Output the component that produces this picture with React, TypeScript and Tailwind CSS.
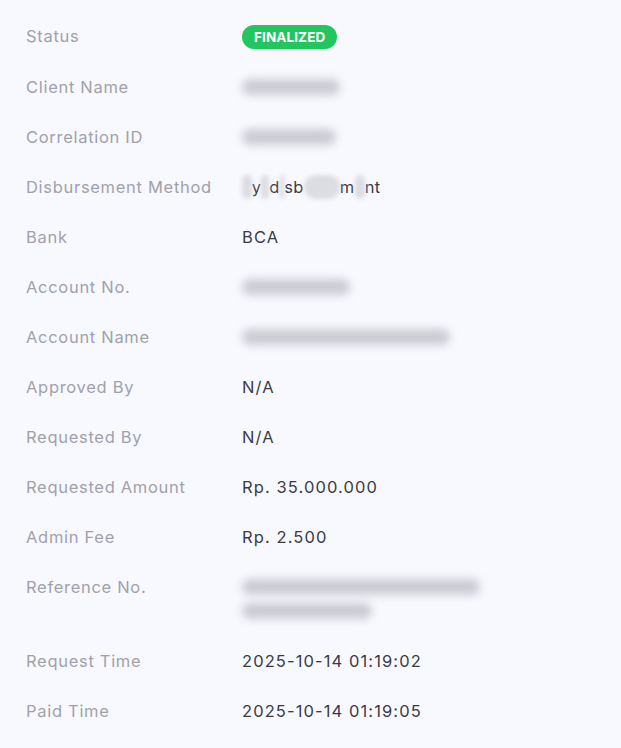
import React from 'react'

type Row = { label: string; value?: React.ReactNode }

function Blur({ w, className = "" }: { w: number; className?: string }) {
    return (
        <span
            className={`block h-[16px] rounded-full bg-[#cbcbd3] blur-[4px] ${className}`}
            style={{ width: w }}
        />
    )
}

// partly hidden text: "~" marks a character that is smudged out
function Smudged({ text }: { text: string }) {
    const parts = text.match(/(~[^~]+~|[^~]+)/g) ?? []
    return (
        <span className="tracking-[0.4px]">
            {parts.map((p, i) =>
                p.startsWith("~") ? (
                    <span key={i} className="inline-block rounded-full bg-[#dcdce3] text-transparent blur-[2px]">
                        {p.slice(1, -1)}
                    </span>
                ) : (
                    <span key={i}>{p}</span>
                )
            )}
        </span>
    )
}

export default function App() {
    const rows: Row[] = [
        {
            label: "Status",
            value: (
                <span className="inline-flex items-center h-[24px] px-[12px] rounded-full bg-[#22c55e] text-white text-[13.5px] font-bold tracking-[0.1px]">
                    FINALIZED
                </span>
            ),
        },
        { label: "Client Name", value: <div className="h-[24px] flex items-center"><Blur w={98} /></div> },
        { label: "Correlation ID", value: <div className="h-[24px] flex items-center"><Blur w={94} /></div> },
        { label: "Disbursement Method", value: <Smudged text="~a~y~_~d~i~sb~urse~m~e~nt" /> },
        { label: "Bank", value: "BCA" },
        { label: "Account No.", value: <div className="h-[24px] flex items-center"><Blur w={108} /></div> },
        { label: "Account Name", value: <div className="h-[24px] flex items-center"><Blur w={208} /></div> },
        { label: "Approved By", value: "N/A" },
        { label: "Requested By", value: "N/A" },
        { label: "Requested Amount", value: "Rp. 35.000.000" },
        { label: "Admin Fee", value: "Rp. 2.500" },
        {
            label: "Reference No.",
            value: (
                <div className="flex flex-col">
                    <div className="h-[24px] flex items-center"><Blur w={238} /></div>
                    <div className="h-[24px] flex items-center"><Blur w={130} /></div>
                </div>
            ),
        },
        { label: "Request Time", value: "2025-10-14 01:19:02" },
        { label: "Paid Time", value: "2025-10-14 01:19:05" },
    ]

    return (
        <div className="min-h-[748px] w-full bg-[#f8f9fe] pt-[11px] font-['Inter',sans-serif] text-[16.5px] leading-[24px]">
            {rows.map((r) => (
                <div key={r.label} className="flex py-[13px] px-[26px]">
                    <div className="w-[216px] shrink-0 text-[#a0a1aa] tracking-[0.7px]">{r.label}</div>
                    <div className="text-[#3b3b47] tracking-[1.1px]">{r.value}</div>
                </div>
            ))}
        </div>
    )
}
